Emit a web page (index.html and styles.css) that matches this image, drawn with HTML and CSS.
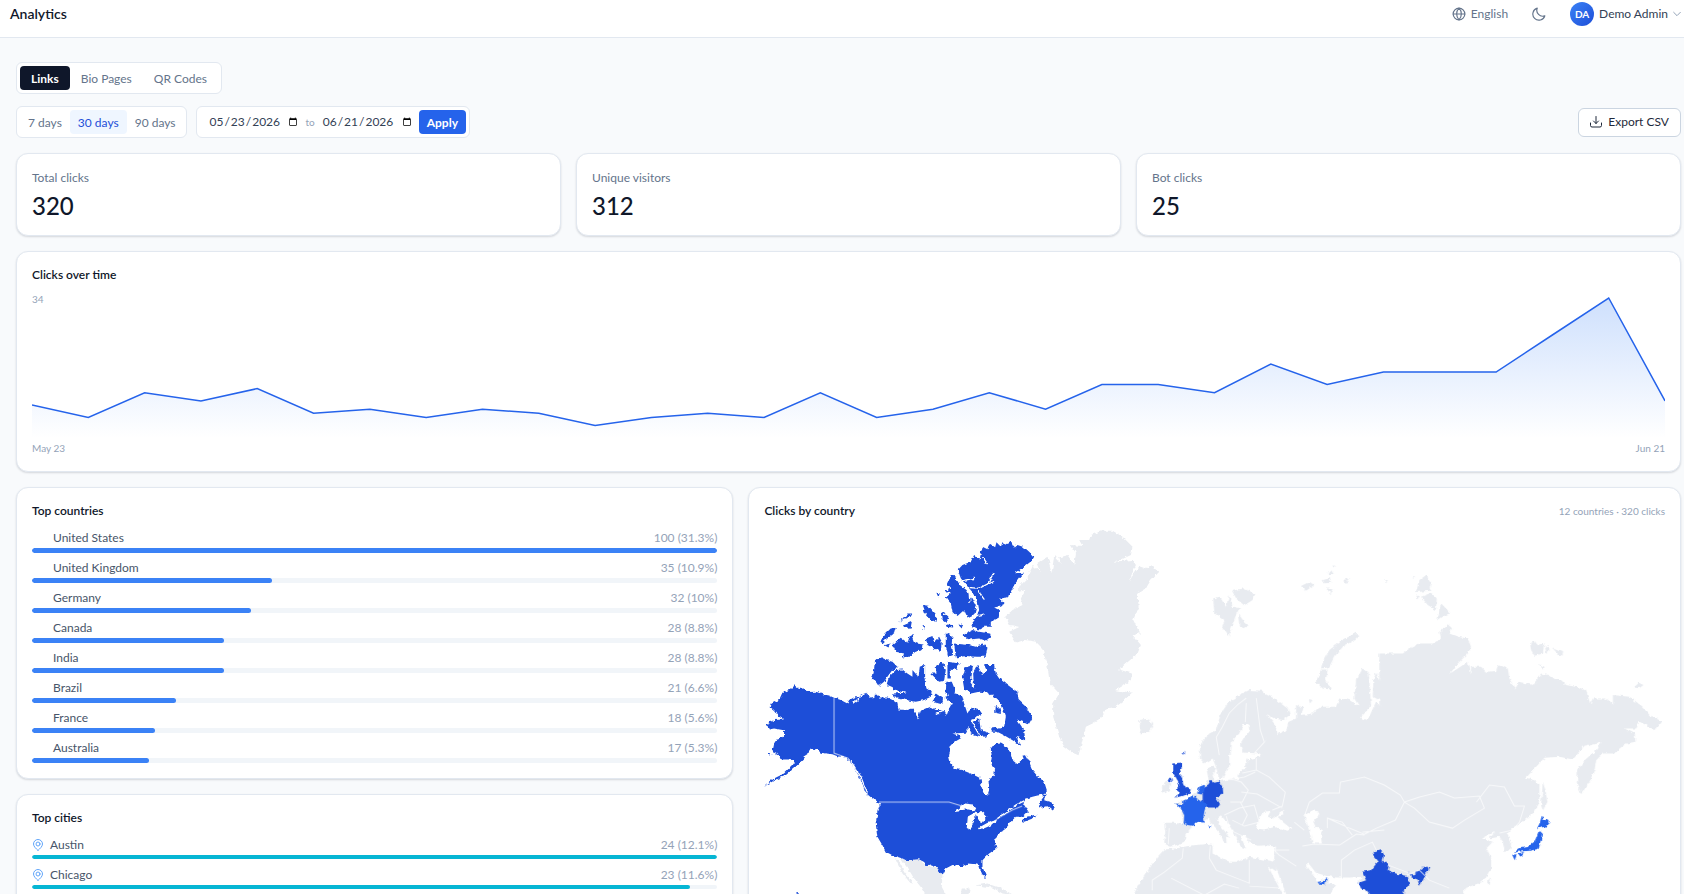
FILE: index.html
```html
<!DOCTYPE html>
<html lang="en">
<head>
    <meta charset="UTF-8">
    <meta name="viewport" content="width=device-width, initial-scale=1.0">
    <title>Analytics</title>
    <link rel="stylesheet" href="styles.css">
</head>
<body>

    <header class="topbar">
        <h1>Analytics</h1>
        <div class="topbar-actions">
            <button class="lang">
                <svg class="icon" width="14" height="14" viewBox="0 0 24 24"><circle cx="12" cy="12" r="10"/><path d="M2 12h20M12 2c3 3 4 6.500 4 10s-1 7-4 10c-3-3-4-6.500-4-10s1-7 4-10z"/></svg>
                English
            </button>
            <button class="theme" aria-label="Dark mode">
                <svg class="icon" width="14" height="14" viewBox="0 0 24 24"><path d="M22 15A10.500 10.500 0 1 1 9 2a10 10 0 0 0 13 13z"/></svg>
            </button>
            <button class="user">
                <span class="avatar">DA</span>
                Demo Admin
                <svg class="icon chevron" width="8" height="8" viewBox="0 0 24 24"><path d="M2 7l10 10L22 7"/></svg>
            </button>
        </div>
    </header>

    <main>
        <nav class="group tabs">
            <button class="active">Links</button>
            <button>Bio Pages</button>
            <button>QR Codes</button>
        </nav>

        <div class="filters">
            <div class="group ranges">
                <button>7 days</button>
                <button class="active">30 days</button>
                <button>90 days</button>
            </div>
            <form class="group dates">
                <input type="date" value="2026-05-23" aria-label="From">
                <span>to</span>
                <input type="date" value="2026-06-21" aria-label="To">
                <button type="button" class="apply">Apply</button>
            </form>
            <button class="export">
                <svg class="icon" width="12" height="12" viewBox="0 0 24 24"><path d="M12 1v14M7 10l5 5 5-5M1 14v5a3 3 0 0 0 3 3h16a3 3 0 0 0 3-3v-5"/></svg>
                Export CSV
            </button>
        </div>

        <section class="stats">
            <div class="card stat"><p>Total clicks</p><strong>320</strong></div>
            <div class="card stat"><p>Unique visitors</p><strong>312</strong></div>
            <div class="card stat"><p>Bot clicks</p><strong>25</strong></div>
        </section>

        <section class="card chart">
            <h2>Clicks over time</h2>
            <div class="plot">
                <span class="max">34</span>
                <svg viewBox="0 0 29 148" preserveAspectRatio="none">
                    <defs>
                        <linearGradient id="area" x1="0" y1="0" x2="0" y2="1">
                            <stop offset="0" stop-color="#3b82f6" stop-opacity="0.25"/>
                            <stop offset="1" stop-color="#3b82f6" stop-opacity="0"/>
                        </linearGradient>
                    </defs>
                    <path fill="url(#area)" d="M0 148V115.100L1 127.400 2 102.700 3 110.900 4 98.600 5 123.300 6 119.200 7 127.400 8 119.200 9 123.300 10 135.600 11 127.400 12 123.300 13 127.400 14 102.700 15 127.400 16 119.200 17 102.700 18 119.200 19 94.500 20 94.500 21 102.700 22 74 23 94.500 24 82.100 25 82.100 26 82.100 27 45 28 8 29 110.900V148z"/>
                    <polyline class="line" points="0,115.1 1,127.4 2,102.7 3,110.9 4,98.6 5,123.3 6,119.2 7,127.4 8,119.2 9,123.3 10,135.6 11,127.4 12,123.3 13,127.4 14,102.7 15,127.4 16,119.2 17,102.7 18,119.2 19,94.5 20,94.5 21,102.7 22,74 23,94.5 24,82.1 25,82.1 26,82.1 27,45 28,8 29,110.9"/>
                </svg>
            </div>
            <div class="axis"><span>May 23</span><span>Jun 21</span></div>
        </section>

        <section class="columns">
            <div class="stack">
                <div class="card list">
                    <h2>Top countries</h2>
                    <ul>
                        <li><div class="row"><span>United States</span><em>100 (31.3%)</em></div><div class="bar"><i style="width:100%"></i></div></li>
                        <li><div class="row"><span>United Kingdom</span><em>35 (10.9%)</em></div><div class="bar"><i style="width:35%"></i></div></li>
                        <li><div class="row"><span>Germany</span><em>32 (10%)</em></div><div class="bar"><i style="width:32%"></i></div></li>
                        <li><div class="row"><span>Canada</span><em>28 (8.8%)</em></div><div class="bar"><i style="width:28%"></i></div></li>
                        <li><div class="row"><span>India</span><em>28 (8.8%)</em></div><div class="bar"><i style="width:28%"></i></div></li>
                        <li><div class="row"><span>Brazil</span><em>21 (6.6%)</em></div><div class="bar"><i style="width:21%"></i></div></li>
                        <li><div class="row"><span>France</span><em>18 (5.6%)</em></div><div class="bar"><i style="width:18%"></i></div></li>
                        <li><div class="row"><span>Australia</span><em>17 (5.3%)</em></div><div class="bar"><i style="width:17%"></i></div></li>
                    </ul>
                </div>
                <div class="card list cities">
                    <h2>Top cities</h2>
                    <ul>
                        <li><div class="row"><svg class="icon" width="12" height="12" viewBox="0 0 24 24"><path d="M12 23C8 19 3 15 3 10a9 9 0 0 1 18 0c0 5-5 9-9 13z"/><circle cx="12" cy="10" r="4"/></svg><span>Austin</span><em>24 (12.1%)</em></div><div class="bar"><i style="width:100%"></i></div></li>
                        <li><div class="row"><svg class="icon" width="12" height="12" viewBox="0 0 24 24"><path d="M12 23C8 19 3 15 3 10a9 9 0 0 1 18 0c0 5-5 9-9 13z"/><circle cx="12" cy="10" r="4"/></svg><span>Chicago</span><em>23 (11.6%)</em></div><div class="bar"><i style="width:96%"></i></div></li>
                    </ul>
                </div>
            </div>

            <div class="card map">
                <div class="map-head">
                    <h2>Clicks by country</h2>
                    <span>12 countries · 320 clicks</span>
                </div>
                <svg class="world" viewBox="0 0 900 380">
                    <defs>
                        <!-- roughens the coastlines -->
                        <filter id="coast" x="0" y="0" width="100%" height="100%" color-interpolation-filters="sRGB">
                            <feTurbulence type="fractalNoise" baseFrequency="0.25" numOctaves="2" seed="4"/>
                            <feDisplacementMap in="SourceGraphic" scale="4" xChannelSelector="R" yChannelSelector="G"/>
                        </filter>
                    </defs>
                    <g filter="url(#coast)">
                        <!-- Europe, Africa, western Asia -->
                        <g transform="translate(385 -30) scale(0.33333)">
                            <path class="land" d="M165 853L178 838 172 808 190 798 200 805 190 825 195 840 215 843 245 835 265 838 272 810 292 805 276 795 290 772 335 765 325 755 350 720 330 660 345 610 335 575 345 580 375 595 415 625 422 645 400 660 375 655 352 642 375 670 385 702 412 688 418 665 440 655 440 615 462 622 455 645 490 640 510 620 560 620 570 595 600 600 630 620 615 595 620 540 640 505 658 520 662 570 665 615 645 640 632 652 655 660 680 605 703 635 690 600 670 590 672 540 680 518 700 560 710 515 735 577 742 560 720 525 718 500 760 505 770 460 800 440 840 432V1260H660V1182L635 1165 628 1145 640 1130 600 1132 560 1132 525 1125 500 1118 478 1090 470 1095 485 1115 505 1148 530 1132 540 1150 560 1155 540 1182V1260H410V1182L385 1115 372 1085 380 1040 350 1035 325 1037 300 1027 285 1005 275 1010 290 1045 275 1040 258 1005 240 975 215 945 203 955 215 980 243 1012 230 1010 232 1030 218 1020 212 1000 190 975 178 955 165 965 145 965 132 977 103 972 95 925 78 910 118 895 148 870z"/>
                            <path class="land" d="M152 735L180 700 200 690 215 640 235 610 270 585 300 570 340 572 350 600 345 650 350 720 328 760 280 757 272 735 300 690 298 672 282 672 270 700 248 722 246 750 245 790 225 830 212 842 200 800 190 775 165 790 152 775z"/>
                            <path class="land" d="M45 968L75 968 102 972 132 977 110 1000 105 1025 80 1035 65 1040 45 1030 48 995zM0 1105L25 1070 45 1048 75 1045 130 1035 190 1030 190 1060 240 1085 265 1085 300 1070 375 1085 382 1115 355 1095 388 1160 400 1182V1260H-60V1210L-30 1150zM38 860L52 843 66 850 62 870 40 878zM140 882L162 880 166 905 150 900z"/>
                            <path class="land" d="M620 398L630 405 615 420 580 440 555 470 540 500 532 502 515 505 520 485 540 450 570 425zM515 508L535 508 530 540 545 568 520 565 500 545zM192 295L212 290 230 320 240 285 250 320 272 325 258 350 238 408 218 382 226 360 195 340zM248 272L285 265 318 282 310 300 285 316 262 297zM266 340L285 365 298 376 282 385 270 375zM455 258L480 245 495 255 470 272zM520 240L542 235 545 248 525 250zM535 222L545 210 553 222zM580 240L602 235 590 252zM530 265L550 268 545 282zM550 196L560 198 552 203zM705 240L716 240 710 246zM478 597L490 600 482 610zM-30 660L0 655 12 680 0 695-25 700z"/>
                            <path class="sea" d="M320 985L330 950 345 935 365 932 355 950 372 955 405 928 400 945 385 950 400 965 425 985 415 992 375 980 345 988zM465 945L490 930 512 935 505 950 492 965 500 982 522 990 515 1005 518 1030 490 1030 482 1000 475 975zM240 760L300 762 330 760 332 770 295 778 290 800 268 805 265 835 240 830z"/>
                            <path class="hot" d="M72 790L97 787 97 805 88 820 97 830 103 855 124 865 122 880 95 889 75 892 92 878 80 868 90 855 82 835 72 820zM55 838L65 832 68 845 58 846zM100 757L105 755 103 765zM165 860L178 852 185 838 195 848 213 843 220 858 222 880 200 892 213 912 205 922 175 922 160 910 160 880z"/>
                            <path class="warm" d="M78 910L100 912 103 900 118 895 130 884 150 900 172 910 165 935 163 950 167 968 145 965 132 977 103 972 105 945 95 925zM178 975L185 975 182 987zM144 880L150 860 167 853 165 873 157 883zM505 1145L520 1143 533 1130 528 1152 507 1150z"/>
                        </g>
                        <!-- eastern Asia -->
                        <g transform="translate(635 -50) scale(0.33333)">
                            <path class="land" d="M-60 520L10 520 30 505 60 490 100 490 125 475 120 455 145 433 158 445 150 460 175 470 205 475 215 500 205 520 175 550 152 580 205 545 213 585 215 560 245 560 260 575 290 573 295 555 325 565 330 595 347 628 358 605 400 615 425 580 450 585 470 600 485 600 500 615 540 622 560 632 572 670 580 655 620 655 640 670 640 645 690 650 730 680 750 705 787 722 765 750 740 735 720 725 710 745 675 745 705 760 708 785 680 790 640 820 610 820 590 840 585 870 570 905 545 942 532 910 535 870 555 840 590 810 603 785 555 797 520 838 480 830 435 833 405 865 380 893 405 900 420 912 420 960 400 1000 370 1025 335 1045 322 1060 335 1085 333 1110 315 1112 310 1085 300 1070 270 1075 287 1055 248 1075 280 1085 260 1105 275 1135 275 1165 250 1205 195 1225 190 1260H50L45 1225 28 1190 20 1240-60 1280z"/>
                            <path class="land" d="M430 905L438 930 444 965 430 992 425 975 428 930zM262 1205L275 1195 270 1217zM80 285L97 310 92 332 50 336 60 300zM65 350L95 338 112 355 110 390 85 375zM110 422L125 370 153 400 130 408zM47 342L62 350 55 355zM38 288L48 290 42 294zM392 490L405 483 415 495 435 488 430 520 405 527 395 510zM437 500L448 495 450 512 440 518zM460 505L493 518 480 526zM418 552L439 562 430 568zM703 622L718 608 732 615 720 624z"/>
                            <path class="warm" d="M427 1007L435 1018 453 1027 437 1040 413 1044 420 1030zM418 1052L428 1062 418 1106 390 1112 362 1114 343 1118 360 1104 385 1100 405 1085zM338 1124L352 1122 346 1140zM357 1120L374 1115 368 1124 358 1127z"/>
                        </g>
                        <!-- India -->
                        <g transform="translate(385 -30) scale(0.33333)">
                            <path class="hot" d="M670 1055L695 1047 705 1065 700 1080 718 1098 715 1110 740 1120 775 1128 780 1155 765 1165 760 1200 740 1260H690L662 1182 650 1168 635 1165 628 1148 650 1140 638 1115 665 1110 685 1085 672 1068zM775 1110L780 1122 795 1122 820 1103 840 1103 828 1125 812 1157 805 1138 787 1132z"/>
                        </g>
                        <!-- North America -->
                        <g transform="translate(-15 -20) scale(0.33333)">
                            <path class="hot" d="M135 525L150 537 165 535 180 546 200 545 225 553 240 556 255 563 275 570 295 580 300 570 315 562 330 560 350 547 355 552 375 568 378 550 392 562 415 562 430 570 445 580 448 598 475 600 490 595 500 608 506 625 512 605 525 598 545 590 560 600 585 600 592 618 600 595 608 580 585 560 605 555 620 550 640 560 645 580 655 610 665 592 690 600 700 612 665 628 668 645 655 658 650 668 610 670 638 680 620 690 605 705 600 740 605 760 615 775 640 780 665 790 685 800 695 805 697 830 705 850 717 853 720 835 718 810 735 795 738 775 725 760 728 740 725 715 735 702 755 700 775 712 785 730 790 750 805 762 820 745 828 733 840 755 850 780 865 798 885 815 893 840 885 853 865 856 850 860 830 866 822 880 838 905 820 920 800 920 785 935 770 955 750 970 745 985 735 985 742 1015 720 1030 700 1050 700 1070 710 1095 707 1103 698 1090 690 1065 680 1062 655 1060 640 1068 610 1064 590 1075 580 1095 570 1090 560 1070 545 1065 535 1068 525 1055 510 1048 475 1050 440 1038 430 1035 410 1025 400 1005 385 980 380 940 385 905 393 880 370 866 350 850 335 810 315 770 290 742 265 738 250 732 215 728 205 718 185 715 175 730 165 745 140 770 110 795 80 808 45 830 75 805 105 790 125 770 135 755 125 748 95 748 90 735 70 725 75 700 85 685 105 680 105 660 75 655 60 658 50 642 75 630 105 628 90 620 75 600 65 592 68 580 90 570 100 548 120 540z"/>
                            <path class="hot" d="M695 130L700 110 715 118 720 100 738 112 742 97 755 110 760 97 775 103 785 95 795 115 805 105 825 112 840 125 852 138 848 152 825 170 795 190 825 188 810 205 795 225 785 245 775 262 750 265 765 280 745 290 735 292 750 300 745 325 725 335 725 350 705 350 690 358 665 345 680 325 690 300 685 270 672 248 650 225 635 205 626 180 640 165 665 155 675 135 692 148zM605 195L618 200 632 225 652 240 662 255 670 270 682 290 676 312 655 322 645 300 625 318 610 303 605 280 590 262 605 250 588 245 605 235 592 225z"/>
                            <path class="hot" d="M640 375L670 360 690 365 722 370 725 380 710 392 690 385 660 388zM615 400L660 405 680 410 700 403 715 412 710 440 680 440 650 438 620 442zM590 368L610 378 608 400 612 432 597 438 590 410zM440 395L455 383 475 398 480 380 490 375 500 400 520 403 518 420 500 425 480 438 460 443 465 430 440 425 430 405zM530 385L550 378 555 395 570 380 578 395 575 425 555 415 535 405zM393 390L405 375 425 355 440 353 435 370 415 385 398 402zM450 335L475 310 490 310 485 320 468 325zM460 347L488 335 485 352 465 354zM520 285L538 287 560 312 563 335 545 330 528 308zM575 305L590 315 600 325 590 338 578 330zM562 248L572 250 568 262zM590 343L612 345 612 352 592 350zM516 343L524 345 526 360zM628 345L642 340 638 355zM405 405L425 400 418 412z"/>
                            <path class="hot" d="M378 450L395 443 410 450 430 455 445 470 430 480 415 500 405 515 390 527 380 512 368 508 375 480zM420 500L440 480 460 478 475 490 490 500 490 480 508 500 512 470 525 465 525 500 532 535 548 545 545 560 525 570 500 575 470 570 445 565 430 550 470 548 440 540 425 530 412 525zM545 490L562 490 560 470 580 456 590 480 585 512 570 515 555 500zM550 575L560 550 582 565 575 582zM595 455L632 460 625 475 605 480 605 505 595 505zM592 515L608 515 618 540 615 562 598 562 590 540z"/>
                            <path class="hot" d="M640 505L648 472 672 465 664 520 675 535 672 490 685 465 700 495 712 480 705 465 735 465 740 490 750 505 770 520 790 535 805 545 808 570 830 590 850 622 840 640 820 635 803 628 825 660 828 690 800 680 818 708 790 690 765 675 735 660 765 650 770 620 760 590 745 570 720 548 690 545 665 550 645 535zM660 640L690 625 695 660 722 670 710 680 690 678 665 670zM740 588L755 595 755 612 738 608zM725 652L745 650 745 665 728 665zM890 850L885 870 900 875 917 885 912 902 895 888 868 893 875 872zM815 932L835 920 862 914 858 922 825 935zM142 1143L149 1148 148 1155 143 1152zM60 730L68 733 60 736z"/>
                            <path class="land" d="M455 1045L475 1050 510 1048 535 1068 560 1072 580 1095 578 1130 590 1152V1210H560L515 1130 495 1105 480 1080 465 1060zM436 1040L452 1055 468 1085 492 1120 484 1118 460 1090 445 1060zM680 1126L715 1120 760 1136 795 1155 760 1150 730 1132zM630 1190L638 1135 662 1135 650 1190z"/>
                        </g>
                        <!-- Greenland -->
                        <g transform="translate(215 -20) scale(0.33333)">
                            <path class="land" d="M160 165L185 185 175 158 205 140 218 190 225 135 248 165 240 142 265 135 285 165 290 130 275 105 310 108 300 90 330 90 335 75 370 62 400 62 430 80 460 110 455 135 430 147 400 155 460 150 470 165 448 215 478 170 500 178 515 165 537 185 515 210 500 235 475 250 478 290 462 330 482 370 460 375 485 405 475 430 420 478 458 490 455 510 408 540 458 548 430 575 410 590 380 595 365 625 340 640 320 650 310 690 298 735 280 728 255 710 240 680 222 620 222 580 240 550 212 520 205 470 190 415 170 395 140 390 110 397 90 365 122 350 92 345 78 320 100 300 130 285 125 265 140 240 120 245 120 230 145 205z"/>
                        </g>
                        <!-- lakes, fjords and straits -->
                        <g class="water" transform="translate(-15 -20) scale(0.33333)">
                            <path d="M630 205L655 232 690 235 715 222 732 192M685 240L705 268M640 212L675 205M715 222L735 215M700 140L715 162M660 245L662 275M670 320L705 312"/>
                            <path d="M622 900L645 882 670 885 678 900 655 895zM655 952L658 920 680 908 672 935 662 955zM680 908L700 908 712 920 698 938zM688 955L715 940 740 932 738 938 705 952z"/>
                            <path d="M300 745L335 800 355 850M290 745L318 800 340 825M310 580L350 550M355 852L395 885M450 590L515 580M560 610L600 600M665 630L700 690M745 925L800 885 825 872"/>
                        </g>
                    </g>
                    <!-- borders -->
                    <g class="border">
                        <path d="M70 168V223L84 228 92 246M115 272H185L198 276M225 295L234 288 248 280 258 276"/>
                        <path d="M455 225L452 207 458 197 465 183 474 174 482 168M482 173L481 192M492 168L496 200 500 212 490 223M458 246L477 252 484 260 478 272 466 272M462 250L480 247 491 242M492 228L492 240 505 247 521 262 518 276 508 280M492 240L478 243M477 262L493 264 518 278M460 285L475 278 490 275 495 292 480 296 468 290M476 272L483 285 478 295M487 310L466 300 462 286M405 298L404 314M419 318L418 328 400 342 388 350V360M446 316L445 328 452 340 485 353V330M485 356L520 358M407 348L440 365 460 354 475 358M540 286L545 272 558 263 575 263 576 252 600 247 620 255 636 265 640 272 631 290 612 298 600 304 585 298 563 288V298M538 316L550 314 575 315 592 304 600 305M530 292L540 300M525 320L510 320 515 325 532 336M577 350V330L590 320 608 312 612 320M563 288L578 292 588 305M598 302L620 300M624 335L645 343M640 272L655 267 675 262 690 268 715 266 720 278 700 290 688 298 665 292 650 278 640 272M712 272L725 255 740 257 750 276 760 276 755 292 748 300 735 303M642 345L655 340 665 350 685 358"/>
                    </g>
                </svg>
            </div>
        </section>
    </main>

</body>
</html>
```

FILE: styles.css
```css
* {
    box-sizing: border-box;
}

body {
    margin: 0;
    height: 100vh;
    overflow: hidden;
    background: #f8fafc;
    color: #0f172a;
    font-family: Lato, "Open Sans", sans-serif;
    font-size: 12px;
    line-height: 16px;
}

h1, h2, p, ul {
    margin: 0;
    padding: 0;
}

button, input {
    font: inherit;
    color: inherit;
    border: 0;
    background: none;
    padding: 0;
}

button {
    cursor: pointer;
}

.icon {
    fill: none;
    stroke: currentColor;
    stroke-width: 2;
    stroke-linecap: round;
    stroke-linejoin: round;
    flex-shrink: 0;
}

/* Header */
.topbar {
    display: flex;
    align-items: center;
    justify-content: space-between;
    padding: 2px 3px 11px 10px;
    background: #fff;
    border-bottom: 1px solid #e2e8f0;
}

.topbar h1 {
    font-size: 14px;
    line-height: 24px;
    font-weight: 600;
}

.topbar-actions {
    display: flex;
    align-items: center;
    gap: 24px;
    color: #64748b;
}

.topbar-actions button {
    display: flex;
    align-items: center;
    gap: 5px;
}

.user {
    color: #334155;
}

.avatar {
    width: 24px;
    height: 24px;
    border-radius: 50%;
    background: linear-gradient(135deg, #3b82f6, #1d4ed8);
    color: #fff;
    font-size: 10px;
    font-weight: 700;
    line-height: 24px;
    text-align: center;
}

.chevron {
    color: #94a3b8;
    stroke-width: 3;
}

/* Filters */
main {
    padding: 24px 3px 16px 16px;
}

.group {
    display: inline-flex;
    align-items: center;
    height: 32px;
    padding: 3px;
    background: #fff;
    border: 1px solid #e2e8f0;
    border-radius: 6px;
    color: #64748b;
}

.group button {
    height: 24px;
    padding: 1px 11px 0;
    border-radius: 4px;
}

.tabs {
    display: flex;
    width: max-content;
}

.tabs .active {
    background: #0f172a;
    color: #fff;
    font-weight: 700;
}

.filters {
    display: flex;
    align-items: center;
    gap: 9px;
    margin: 12px 0 15px;
}

.group.ranges button {
    padding: 1px 8px 0;
}

.ranges .active {
    background: #eff6ff;
    color: #1d4ed8;
}

.dates {
    gap: 7px;
    padding-left: 11px;
}

.dates input {
    width: 90px;
    color: #334155;
}

.dates input::-webkit-calendar-picker-indicator {
    width: 10px;
    height: 10px;
    padding: 0;
    margin-left: 4px;
}

.dates input::-webkit-datetime-edit {
    padding: 0;
}

.dates span {
    font-size: 10px;
    color: #94a3b8;
}

.group .apply {
    padding: 1px 8px 0;
    background: #2563eb;
    color: #fff;
    font-weight: 700;
}

.export {
    display: flex;
    align-items: center;
    gap: 6px;
    height: 29px;
    margin-left: auto;
    padding: 0 11px;
    background: #fff;
    border: 1px solid #cbd5e1;
    border-radius: 6px;
    color: #1e293b;
}

/* Cards */
.card {
    background: #fff;
    border: 1px solid #e2e8f0;
    border-radius: 12px;
    padding: 15px;
    box-shadow: 0 1px 2px rgba(15, 23, 42, 0.15);
}

.card h2 {
    font-size: 12px;
    font-weight: 600;
}

.stats {
    display: grid;
    grid-template-columns: repeat(3, 1fr);
    gap: 15px;
}

.stat p {
    line-height: 18px;
    color: #64748b;
    margin-bottom: 5px;
}

.stat strong {
    display: block;
    font-size: 24px;
    line-height: 28px;
    font-weight: 500;
}

.chart {
    margin: 15px 0;
}

.plot {
    position: relative;
    margin-top: 7px;
}

.plot svg {
    display: block;
    width: 100%;
    height: 148px;
}

.line {
    fill: none;
    stroke: #2563eb;
    stroke-width: 1.5;
    vector-effect: non-scaling-stroke;
}

.max {
    position: absolute;
    top: 1px;
    left: 0;
    font-size: 10px;
    color: #94a3b8;
}

.axis {
    display: flex;
    justify-content: space-between;
    margin-top: 2px;
    font-size: 10px;
    color: #94a3b8;
}

/* Lists */
.columns {
    display: grid;
    grid-template-columns: 10fr 13fr;
    gap: 15px;
    align-items: start;
}

.stack {
    display: flex;
    flex-direction: column;
    gap: 15px;
}

.list ul {
    list-style: none;
    display: flex;
    flex-direction: column;
    gap: 7px;
    margin-top: 11px;
}

.row {
    display: flex;
    align-items: center;
    gap: 6px;
    padding-left: 21px;
    color: #475569;
}

.row em {
    margin-left: auto;
    font-style: normal;
    color: #94a3b8;
}

.bar {
    height: 5px;
    margin-top: 2px;
    border-radius: 3px;
    background: #f1f5f9;
    overflow: hidden;
}

.bar i {
    display: block;
    height: 100%;
    border-radius: 3px;
    background: #3b82f6;
}

.cities .row {
    padding-left: 0;
}

.cities .icon {
    color: #60a5fa;
}

.cities .bar {
    height: 4px;
    margin-bottom: 1px;
}

.cities .bar i {
    background: #06b6d4;
}

/* Map */
.map-head {
    display: flex;
    justify-content: space-between;
}

.map-head span {
    font-size: 10px;
    color: #94a3b8;
}

.world {
    display: block;
    width: 100%;
    margin-top: 11px;
}

.land {
    fill: #e8ebf0;
}

.hot {
    fill: #1d4ed8;
}

.warm {
    fill: #2563eb;
}

.sea {
    fill: #fff;
}

.water path {
    fill: none;
    stroke: #fff;
    stroke-width: 4;
}

.water path:nth-child(2) {
    fill: #fff;
}

.border {
    fill: none;
    stroke: #fff;
    stroke-width: 1;
    stroke-opacity: 0.7;
}
```
